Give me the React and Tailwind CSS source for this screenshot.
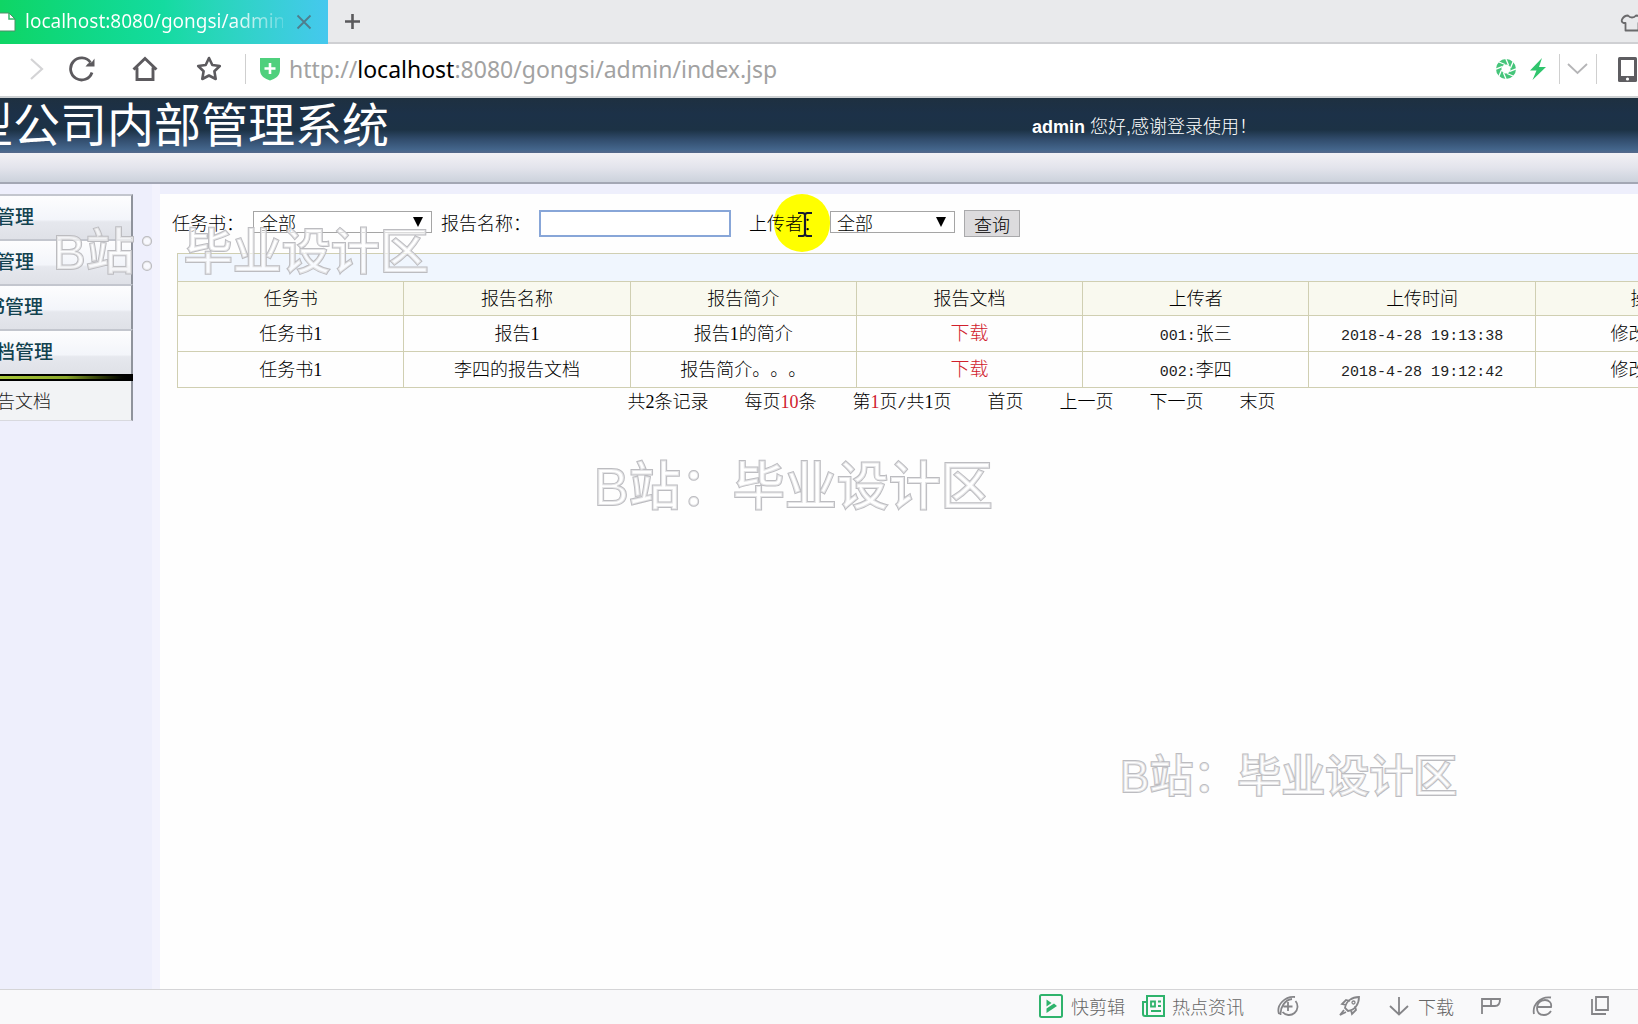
import React from "react";

const SANS = "font-['Noto_Sans','Noto_Sans_CJK_SC',sans-serif]";
const CJK = "font-['Noto_Sans_CJK_SC',sans-serif]";

function Num({ children, red }) {
  return (
    <span className={"font-['Liberation_Serif',serif] leading-none " + (red ? "text-[#d0202c]" : "")}>
      {children}
    </span>
  );
}

function Mono({ children }) {
  return <span className="font-['Liberation_Mono',monospace] text-[15px] leading-none text-[#222]">{children}</span>;
}

function TabBar() {
  return (
    <div className="flex h-11 items-stretch border-b-2 border-[#cfd0d3] bg-[#e9eaec]">
      <div className="-mb-[2px] flex w-[328px] items-center bg-gradient-to-r from-[#0fd564] via-[#14dba0] to-[#45c8ee]">
        <svg width="16" height="20" viewBox="0 0 16 20" className="shrink-0" aria-hidden="true">
          <path d="M-3 1H9l6 6v12H-3z" fill="#fff" />
          <path d="M9 1v6h6" fill="none" stroke="#35b96b" strokeWidth="1.5" />
          <path d="M0 1h9l6 6v12H0" fill="none" stroke="#4d8f66" strokeWidth="1" />
        </svg>
        <span className="ml-[9px] w-[258px] overflow-hidden whitespace-nowrap bg-gradient-to-r from-white from-80% to-white/20 bg-clip-text pb-[3px] text-[19px] leading-7 text-transparent">
          localhost:8080/gongsi/admin
        </span>
        <button type="button" aria-label="关闭标签页" className="ml-3">
          <svg width="18" height="18" viewBox="0 0 18 18" aria-hidden="true">
            <path d="M2.500 2.500l13 13M15.500 2.500l-13 13" stroke="#4f7d8c" strokeWidth="1.800" />
          </svg>
        </button>
      </div>
      <button type="button" aria-label="新建标签页" className="ml-4 flex items-center">
        <svg width="17" height="17" viewBox="0 0 17 17" aria-hidden="true">
          <path d="M8.500 1v15M1 8.500h15" stroke="#5a5a5c" strokeWidth="2.600" />
        </svg>
      </button>
      <button type="button" aria-label="皮肤" className="-mr-[6px] ml-auto flex items-center pt-1">
        <svg width="24" height="20" viewBox="0 0 24 20" aria-hidden="true">
          <path
            d="M8 2.500Q4 2.500 2 6.500 1 9 3.500 10h2v7.500h13V10h2q2.500-1 1.500-3.500Q20 2.500 16 2.500q-1.500 2-4 2t-4-2z"
            fill="none" stroke="#6a6a6c" strokeWidth="1.800" strokeLinejoin="round"
          />
        </svg>
      </button>
    </div>
  );
}

function AddressBar() {
  return (
    <div className="flex h-[54px] items-center border-b-2 border-[#cdd0d2] bg-white pb-[2px]">
      <button type="button" aria-label="前进" className="ml-7">
        <svg width="16" height="24" viewBox="0 0 16 24" aria-hidden="true">
          <path d="M3 2l11 10L3 22" fill="none" stroke="#d4d4d6" strokeWidth="2.200" />
        </svg>
      </button>
      <button type="button" aria-label="刷新" className="ml-6">
        <svg width="28" height="26" viewBox="0 0 28 26" aria-hidden="true">
          <path d="M22.500 6.500A11 11 0 1 0 24 16.500" fill="none" stroke="#5c5a5e" strokeWidth="2.800" />
          <path d="M26.500 2.500V10.500H17.500L20 7.500 24 6z" fill="#5c5a5e" />
        </svg>
      </button>
      <button type="button" aria-label="主页" className="ml-9">
        <svg width="26" height="26" viewBox="0 0 26 26" aria-hidden="true">
          <path d="M1.500 13.500L13 2.500l11.500 11M5 11.500V23.500h16V11.500" fill="none" stroke="#5c5a5e" strokeWidth="2.900" />
        </svg>
      </button>
      <button type="button" aria-label="收藏" className="ml-[38px]">
        <svg width="26" height="26" viewBox="0 0 26 26" aria-hidden="true">
          <path d="M13 2l3.300 7 7.500 1-5.400 5.300 1.300 7.700L13 19.500 6.300 23l1.300-7.700L2.200 10l7.500-1z" fill="none" stroke="#5c5a5e" strokeWidth="2.600" strokeLinejoin="round" />
        </svg>
      </button>
      <div className="ml-[23px] h-[30px] w-px bg-[#cfcfcf]" />
      <svg width="22" height="24" viewBox="0 0 22 24" className="ml-[13px] shrink-0" aria-hidden="true">
        <path d="M1 1h20v12c0 6-5 9-10 10.500C6 22 1 19 1 13z" fill="#4fd07d" />
        <path d="M11 6v11M5.500 11.500h11" stroke="#fff" strokeWidth="2.600" />
      </svg>
      <div className="ml-2 whitespace-nowrap text-[23px] leading-8 text-[#a2a2a2]">
        http://<span className="text-black">localhost</span>:8080/gongsi/admin/index.jsp
      </div>
      <div className="-mr-px ml-auto flex items-center">
        <svg width="22" height="22" viewBox="-11 -11 22 22" aria-hidden="true">
          <circle r="7.300" fill="none" stroke="#45c57a" strokeWidth="5.400" />
          {[0, 45, 90, 135, 180, 225, 270, 315].map((a) => (
            <path key={a} d="M4.500 -1L8 -9.500" stroke="#fff" strokeWidth="1.300" transform={`rotate(${a})`} />
          ))}
        </svg>
        <svg width="18" height="24" viewBox="0 0 18 24" className="ml-3" aria-hidden="true">
          <path d="M13 1L1 13.500h6.500L3.500 23 17 10H10z" fill="#2fc56d" />
        </svg>
        <div className="ml-[12px] h-[30px] w-px bg-[#cfcfcf]" />
        <button type="button" aria-label="更多地址" className="ml-[7px]">
          <svg width="21" height="12" viewBox="0 0 21 12" aria-hidden="true">
            <path d="M1 1l9.500 9L20 1" fill="none" stroke="#b5b5b7" strokeWidth="1.800" />
          </svg>
        </button>
        <div className="ml-2 h-[30px] w-px bg-[#cfcfcf]" />
        <svg width="22" height="25" viewBox="0 0 22 25" className="ml-[20px]" aria-hidden="true">
          <rect x="1" y="0" width="19" height="25" rx="1.500" fill="#5e5d61" />
          <rect x="4" y="3" width="13" height="16" fill="#fff" />
          <circle cx="10.500" cy="22" r="1.600" fill="#fff" />
        </svg>
      </div>
    </div>
  );
}

function Banner() {
  return (
    <>
      <header className="flex h-[55px] items-center overflow-hidden bg-[linear-gradient(#1e3040_0%,#1c3148_30%,#1c3245_58%,#314c6c_75%,#44668c_94%,#56688a_100%)] text-white">
        <h1 className={CJK + " -ml-[34px] whitespace-nowrap pb-2 text-[47px] leading-[52px]"}>型公司内部管理系统</h1>
        <p className="ml-auto w-[606px] whitespace-nowrap pt-[2px] font-['Liberation_Sans','Noto_Sans_CJK_SC',sans-serif] text-lg font-light">
          <b className="font-bold">admin</b> 您好,感谢登录使用！
        </p>
      </header>
      <div className="h-[31px] border-b-2 border-[#a3a7b4] bg-gradient-to-b from-[#f3f1f5] via-[#e3e4ec] to-[#ccd2dc]" />
    </>
  );
}

function MenuItem({ pad, children }) {
  return (
    <a href="#menu" className={"flex h-[45px] items-center justify-end whitespace-nowrap border-r-2 border-t-2 border-r-[#8f939c] border-t-[#c3c6ce] bg-[linear-gradient(#fdfdfe_0%,#f3f5fa_55%,#e6e8ee_60%,#dfe1e7_100%)] pb-[2px] text-[19px] font-medium text-[#12424f] " + pad}>
      {children}
    </a>
  );
}

function Sidebar() {
  return (
    <nav className={CJK + " w-[160px] shrink-0 overflow-hidden border-r-8 border-[#f3f3fd] bg-[#eeeffc]"}>
      <div className="mt-[10px] w-[133px]">
        <MenuItem pad="pr-[97px]">管理</MenuItem>
        <MenuItem pad="pr-[97px]">管理</MenuItem>
        <MenuItem pad="pr-[88px]">书管理</MenuItem>
        <MenuItem pad="pr-[78px]">档管理</MenuItem>
        <div className="h-[7px] border-y-2 border-black bg-gradient-to-r from-[#a9c838] via-[#8ba62a] to-black" />
        <a href="#docs" className="flex h-10 items-center justify-end whitespace-nowrap border-b border-r-2 border-b-[#d8d9de] border-r-[#8f939c] bg-[#f2f3f5] pb-[2px] pr-20 text-lg font-light text-[#222]">
          告文档
        </a>
      </div>
    </nav>
  );
}

function Select({ id, width }) {
  return (
    <span className={"relative mt-px flex " + width}>
      <select id={id} className="h-[22px] w-full appearance-none rounded-none border border-[#a5a5a5] bg-white pl-[6px] text-lg leading-5 text-black">
        <option>全部</option>
      </select>
      <svg width="10" height="10" viewBox="0 0 10 10" className="pointer-events-none absolute right-[9px] top-[6px]" aria-hidden="true">
        <path d="M0 0h10L5 10z" fill="#000" />
      </svg>
    </span>
  );
}

function Filters() {
  return (
    <form className="relative ml-3 flex h-7 items-start whitespace-nowrap text-lg leading-6" onSubmit={(e) => e.preventDefault()}>
      <label htmlFor="task" className="w-[81px]">任务书：</label>
      <Select id="task" width="w-[179px]" />
      <label htmlFor="name" className="ml-[9px] w-[98px]">报告名称：</label>
      <input id="name" type="text" className="h-[27px] w-[192px] border-2 border-[#88a6d8] bg-white px-1" />
      <label htmlFor="uploader" className="relative ml-[18px] w-[81px]">
        <span className="absolute -top-4 left-[25px] h-[58px] w-[56px] rounded-full bg-[#ffff00]" />
        <span className="relative">上传者：</span>
        <svg width="14" height="27" viewBox="0 0 14 27" className="absolute left-[49px] top-px" aria-hidden="true">
          <path d="M0 2h5l2 1 2-1h5M7 3v21M0 25h5l2-1 2 1h5" fill="none" stroke="#151a30" strokeWidth="2.200" />
        </svg>
      </label>
      <Select id="uploader" width="w-[125px]" />
      <button type="submit" className="ml-[9px] h-[27px] w-14 border border-[#a9a9ab] bg-[#dcdbdd] leading-6">查询</button>
    </form>
  );
}

const HEADS = ["任务书", "报告名称", "报告简介", "报告文档", "上传者", "上传时间", "操作"];
const ROWS = [
  { name: <>报告<Num>1</Num></>, intro: <>报告<Num>1</Num>的简介</>, code: "001:", who: "张三", time: "2018-4-28 19:13:38" },
  { name: "李四的报告文档", intro: "报告简介。。。", code: "002:", who: "李四", time: "2018-4-28 19:12:42" },
];

function Reports() {
  return (
    <div className="ml-[17px] mt-[15px]">
      <div className="w-[108.5%]">
        <table className="w-full table-fixed border-collapse text-center text-lg leading-6 text-black [&_td]:border [&_td]:border-[#d0cfb2] [&_td]:pb-1 [&_th]:border [&_th]:border-[#d0cfb2] [&_th]:pb-1 [&_th]:font-light">
          <thead>
            <tr className="h-7 bg-[#f0f6fe]">
              <td colSpan={7} />
            </tr>
            <tr className="h-[34px] bg-[#f9f9ef]">
              {HEADS.map((h) => (
                <th key={h} scope="col">{h}</th>
              ))}
            </tr>
          </thead>
          <tbody>
            {ROWS.map((r) => (
              <tr key={r.code} className="h-9">
                <td>任务书<Num>1</Num></td>
                <td>{r.name}</td>
                <td>{r.intro}</td>
                <td><a href="#download" className="text-[19px] text-[#d0202c]">下载</a></td>
                <td><Mono>{r.code}</Mono>{r.who}</td>
                <td><Mono>{r.time}</Mono></td>
                <td><a href="#edit">修改</a> <a href="#delete">删除</a></td>
              </tr>
            ))}
          </tbody>
        </table>
        <div className="flex justify-center gap-9 whitespace-nowrap pr-9 text-lg leading-6 text-black">
          <span>共<Num>2</Num>条记录</span>
          <span>每页<Num red>10</Num>条</span>
          <span>第<Num red>1</Num>页<Mono>/</Mono>共<Num>1</Num>页</span>
          <a href="#first">首页</a>
          <a href="#prev">上一页</a>
          <a href="#next">下一页</a>
          <a href="#last">末页</a>
        </div>
      </div>
    </div>
  );
}

function Watermark({ place }) {
  return (
    <div aria-hidden="true" className={"pointer-events-none absolute whitespace-nowrap font-['Liberation_Sans','Noto_Sans_CJK_SC',sans-serif] font-medium leading-[60px] text-white/60 [-webkit-text-stroke:2px_#bcbcc0] [paint-order:stroke_fill] " + place}>
      B站：毕业设计区
    </div>
  );
}

function StatusBar() {
  const line = { fill: "none", stroke: "#858588", strokeWidth: 1.8 };
  return (
    <footer className={CJK + " flex h-[35px] shrink-0 items-center justify-end border-t border-[#d5d5d7] bg-[#f9f9fa] pb-[2px] pr-7 text-lg font-light leading-6 text-[#666]"}>
      <button type="button" className="flex items-center gap-2">
        <svg width="24" height="24" viewBox="0 0 24 24" aria-hidden="true">
          <rect x="1" y="1" width="22" height="22" rx="1.500" fill="none" stroke="#2fb36c" strokeWidth="2" />
          <path d="M7.500 5.500L12.500 9l-5 3.500zM7.500 14.500L15 9.500l3 2.500-10.500 7z" fill="#2fb36c" />
        </svg>
        快剪辑
      </button>
      <button type="button" className="ml-[17px] flex items-center gap-[7px]">
        <svg width="23" height="24" viewBox="0 0 23 24" aria-hidden="true">
          <path d="M5 2h17v20H3q-2 0-2-2V8h4zM5 8v13" fill="none" stroke="#2fb36c" strokeWidth="2" />
          <path d="M9 7.500h4v5H9zM16 7.500h3M16 12h3M9 17h10" fill="none" stroke="#2fb36c" strokeWidth="1.800" />
        </svg>
        热点资讯
      </button>
      <button type="button" aria-label="加速" className="ml-[33px]">
        <svg width="22" height="22" viewBox="0 0 22 22" aria-hidden="true">
          <path d="M18.500 6a8.500 8.500 0 1 1-13 11M2 19C-1 10 8 1 18 2M3.500 20C3 12 8 5 15 4M11 7v9M6.500 11.500h9" {...line} />
        </svg>
      </button>
      <button type="button" aria-label="清理" className="ml-10">
        <svg width="22" height="22" viewBox="0 0 22 22" aria-hidden="true">
          <path d="M6 13C7 6 13 2 20 2c0 7-4 13-11 14zM7 10L3 9l4-4 4 1M12 15l1 4 4-4-1-4M5 15l-4 5 6-3" {...line} />
          <circle cx="14.500" cy="7.500" r="1.500" {...line} strokeWidth="1.300" />
        </svg>
      </button>
      <button type="button" className="ml-7 flex items-center gap-[9px]">
        <svg width="20" height="20" viewBox="0 0 20 20" aria-hidden="true">
          <path d="M10 1v17M1 10l9 8.500 9-8.500" {...line} />
        </svg>
        下载
      </button>
      <button type="button" aria-label="标记" className="ml-[26px]">
        <svg width="22" height="18" viewBox="0 0 22 18" aria-hidden="true">
          <path d="M2 17V2h18c0 5-2 7-5 7H2M11 2v7" {...line} />
        </svg>
      </button>
      <button type="button" aria-label="浏览器模式" className="ml-[30px]">
        <svg width="22" height="22" viewBox="0 0 22 22" aria-hidden="true">
          <path d="M6 12h13c1-4-2-7-6-7-5 0-8 4-8 8 0 5 3 7 7 7 3 0 5-1 7-4M2 19C0 10 8 1 19 2.500" {...line} />
        </svg>
      </button>
      <button type="button" aria-label="窗口" className="ml-9">
        <svg width="20" height="20" viewBox="0 0 20 20" aria-hidden="true">
          <path d="M6 1h12v13H6zM2 3v15h14" {...line} />
        </svg>
      </button>
    </footer>
  );
}

export default function App() {
  return (
    <div className={SANS + " relative flex h-screen flex-col overflow-hidden bg-[#eeeffc] [text-spacing-trim:space-all]"}>
      <TabBar />
      <AddressBar />
      <Banner />
      <div className="flex min-h-0 flex-1">
        <Sidebar />
        <main className={CJK + " mt-[10px] min-w-0 flex-1 overflow-hidden bg-[#fefefe] pt-4 font-light text-black"}>
          <Filters />
          <Reports />
        </main>
      </div>
      <StatusBar />
      <Watermark place="left-[53px] top-[222px] text-[49px]" />
      <Watermark place="left-[594px] top-[457px] text-[52px]" />
      <Watermark place="left-[1120px] top-[747px] text-[44px]" />
    </div>
  );
}
